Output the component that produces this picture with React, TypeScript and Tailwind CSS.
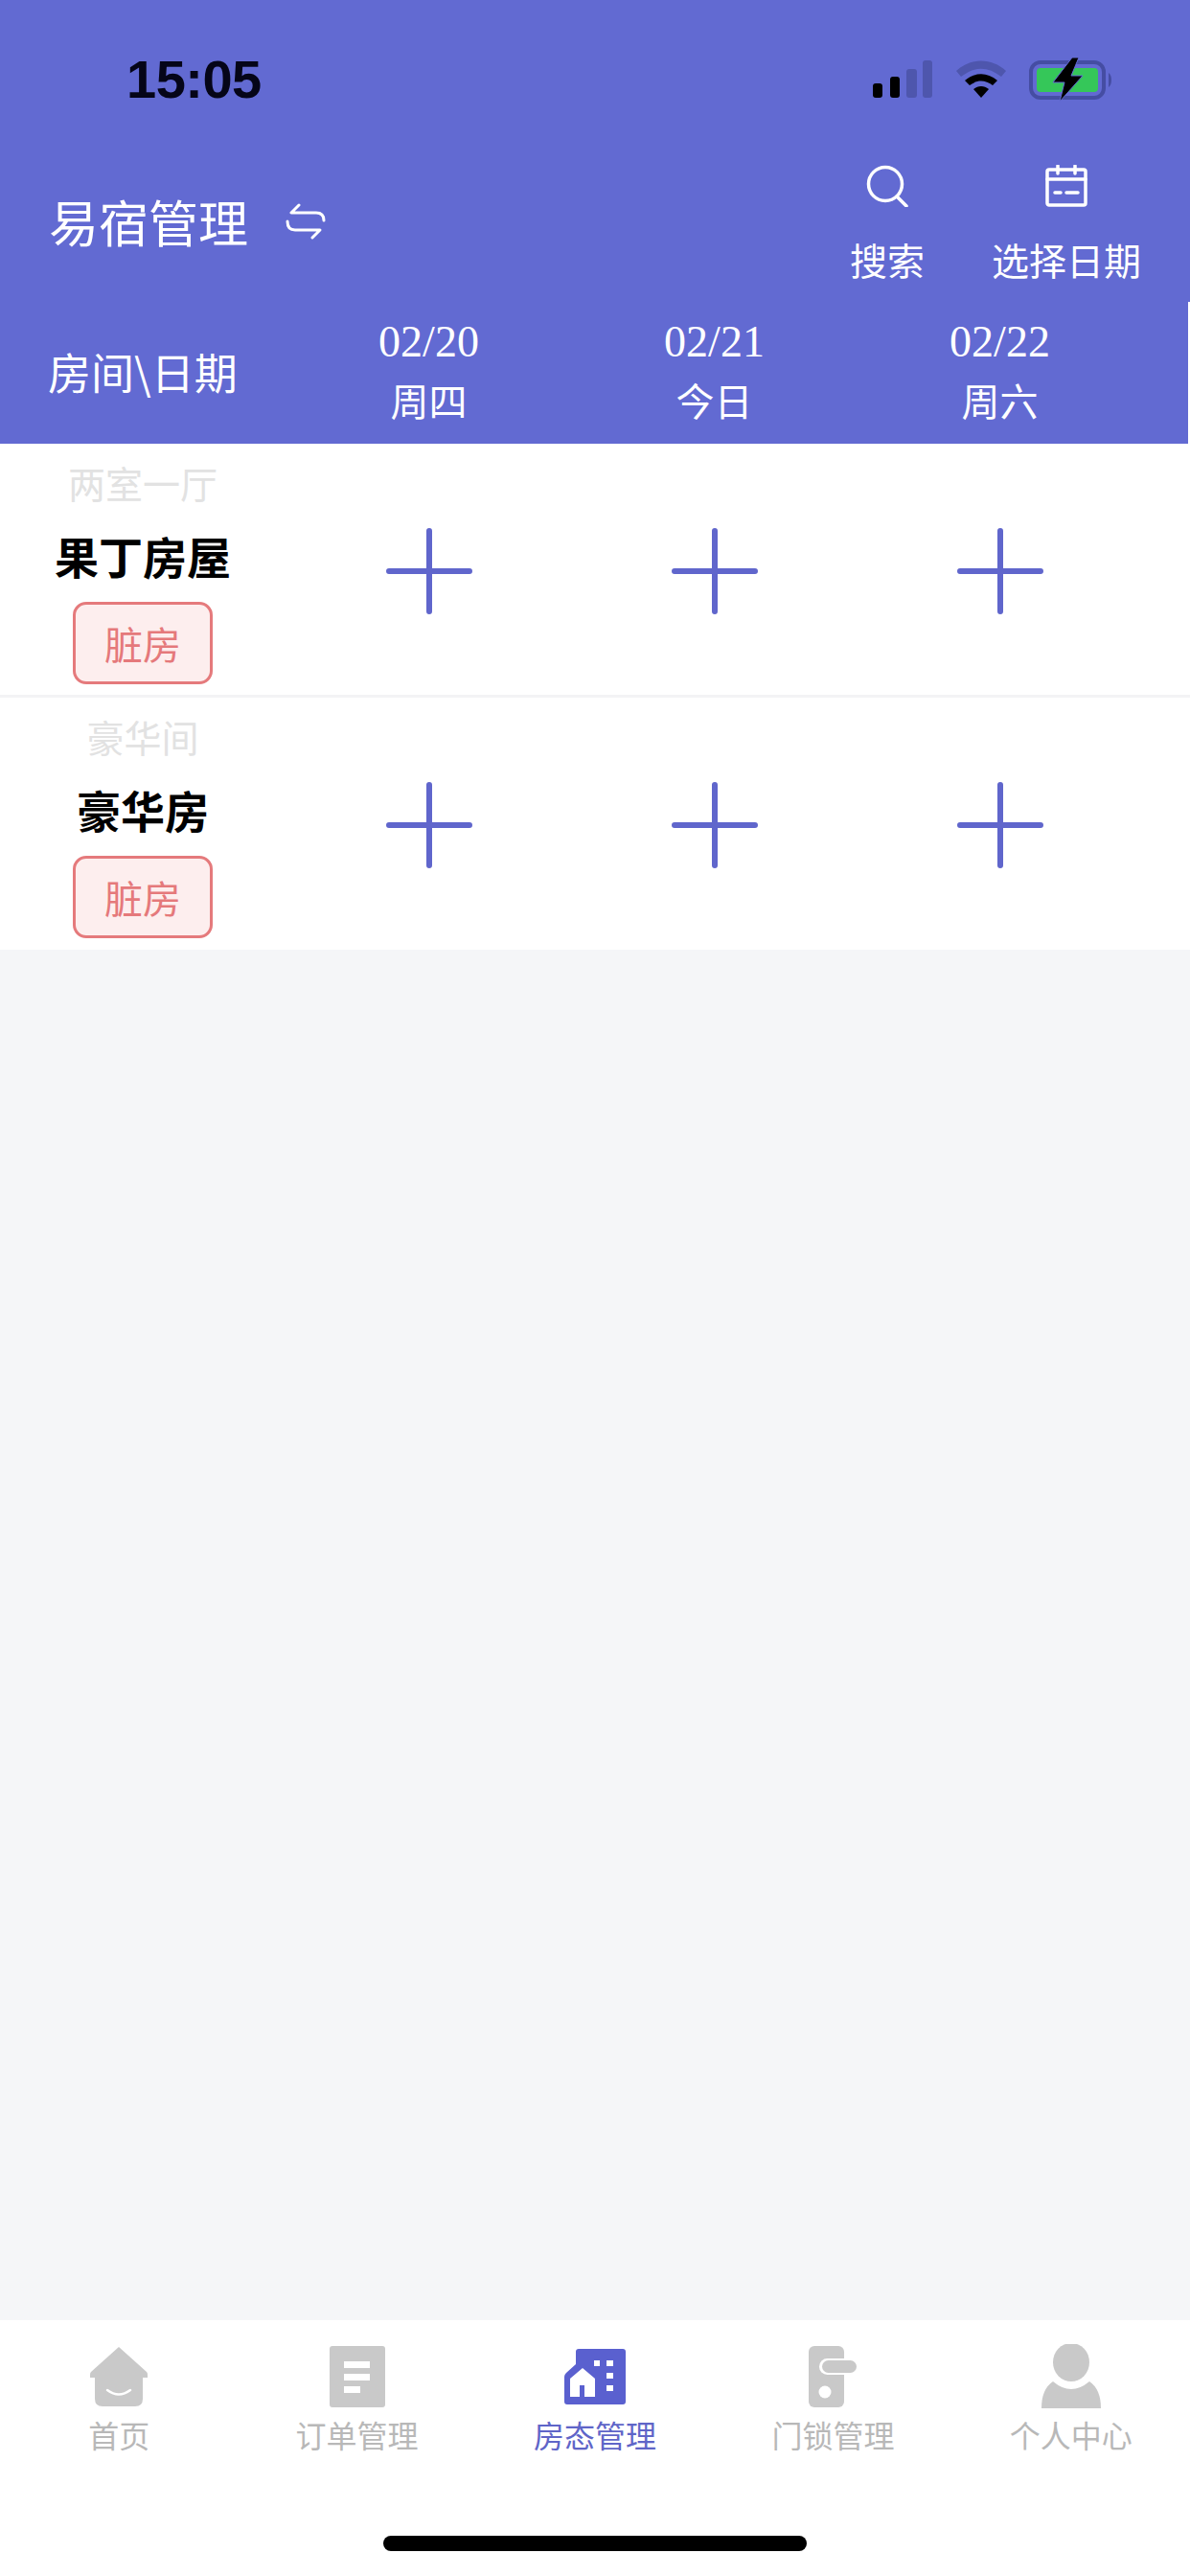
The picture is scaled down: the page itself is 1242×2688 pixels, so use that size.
const cjk = "font-['Noto_Sans_CJK_SC','Noto_Sans',sans-serif]";

function Signal() {
  return (
    <svg width="62" height="39" viewBox="0 0 62 39">
      <rect x="0" y="24" width="10" height="15" rx="3" fill="#000" />
      <rect x="18" y="17" width="10" height="22" rx="3" fill="#000" />
      <rect x="35" y="9" width="11" height="30" rx="3" fill="#4e56ad" />
      <rect x="52" y="0" width="10" height="39" rx="3" fill="#4e56ad" />
    </svg>
  );
}

function Wifi() {
  return (
    <svg width="52" height="39" viewBox="0 0 52 39">
      <path d="M0 11 C15 -3 37 -3 52 11 L47 17 C33 6 19 6 5 17 Z" fill="#4e56ad" />
      <path d="M9 21 C20 12 32 12 43 21 L38 26 C30 20 22 20 14 26 Z" fill="#000" />
      <path d="M18 30 C23 26 29 26 34 30 L26 39 Z" fill="#000" />
    </svg>
  );
}

function Battery() {
  return (
    <svg width="88" height="46" viewBox="0 0 88 46">
      <rect x="2" y="5" width="76" height="37" rx="10" fill="none" stroke="#454da3" strokeWidth="4" />
      <rect x="8" y="11" width="64" height="25" rx="4" fill="#35c759" />
      <path d="M83 16 C87 18 87 29 83 31 Z" fill="#454da3" />
      <path d="M45 0 L25 26 H37 L32 46 L56 19 H44 L52 0 Z" fill="#000" stroke="#626ad2" strokeWidth="1" />
    </svg>
  );
}

function Swap() {
  return (
    <svg width="42" height="38" viewBox="0 0 42 38" fill="none" stroke="#fff" strokeWidth="3" strokeLinecap="round" strokeLinejoin="round">
      <path d="M14 2 L6 10 H32 C37 10 40 12 40 18" />
      <path d="M2 19 C2 25 5 28 10 28 H36 L28 36" />
    </svg>
  );
}

function SearchIcon() {
  return (
    <svg width="44" height="44" viewBox="0 0 44 44" fill="none" stroke="#fff" strokeWidth="3.5" strokeLinecap="round">
      <circle cx="20" cy="20" r="17.5" />
      <path d="M32 33 L42 43" />
    </svg>
  );
}

function CalendarIcon() {
  return (
    <svg width="44" height="44" viewBox="0 0 44 44" fill="none" stroke="#fff" strokeWidth="3.5" strokeLinecap="round" strokeLinejoin="round">
      <rect x="2" y="5" width="40" height="37" rx="2" />
      <path d="M13 1 V9 M31 1 V9 M2 15 H42 M10 29 H16 M22 29 H34" />
    </svg>
  );
}

function Plus() {
  return (
    <svg width="90" height="90" viewBox="0 0 90 90" stroke="#6066cc" strokeWidth="6" strokeLinecap="round">
      <path d="M3 45 H87 M45 3 V87" />
    </svg>
  );
}

function HomeIcon() {
  return (
    <svg width="60" height="63" viewBox="0 0 60 63">
      <path d="M30 1 L59 27 Q60 28 60 30 V33 H55 V55 Q55 63 47 63 H13 Q5 63 5 55 V33 H0 V30 Q0 28 1 27 Z" fill="#c9c9c9" />
      <path d="M18 46 Q30 55 42 46" fill="none" stroke="#fff" strokeWidth="2.5" strokeLinecap="round" />
    </svg>
  );
}

function DocIcon() {
  return (
    <svg width="58" height="64" viewBox="0 0 58 64">
      <rect width="58" height="64" rx="3" fill="#c9c9c9" />
      <rect x="15" y="16" width="27" height="7" fill="#fff" />
      <rect x="15" y="29" width="27" height="7" fill="#fff" />
      <rect x="15" y="42" width="17" height="7" fill="#fff" />
    </svg>
  );
}

function BuildingIcon() {
  return (
    <svg width="64" height="58" viewBox="0 0 64 58">
      <path d="M12 3 Q12 0 15 0 H61 Q64 0 64 3 V55 Q64 58 61 58 H3 Q0 58 0 55 V29 Q0 27 2 25 L12 16 Z" fill="#5a60cf" />
      <path d="M19 20 L32 31 V50 H21 V38 H16 V50 H6 V31 Z" fill="#fff" />
      <rect x="31" y="12" width="6" height="6" fill="#fff" />
      <rect x="44" y="12" width="7" height="6" fill="#fff" />
      <rect x="44" y="25" width="7" height="6" fill="#fff" />
      <rect x="44" y="38" width="7" height="6" fill="#fff" />
    </svg>
  );
}

function LockIcon() {
  return (
    <svg width="50" height="64" viewBox="0 0 50 64">
      <rect x="0" y="0" width="37" height="64" rx="6" fill="#c9c9c9" />
      <rect x="11" y="13" width="39" height="17" rx="8.5" fill="#fff" />
      <rect x="14" y="15" width="36" height="13" rx="6.5" fill="#c9c9c9" />
      <circle cx="17" cy="48" r="6.5" fill="#fff" />
    </svg>
  );
}

function PersonIcon() {
  return (
    <svg width="62" height="67" viewBox="0 0 62 67">
      <ellipse cx="31" cy="19" rx="19" ry="20" fill="#c9c9c9" />
      <path d="M12 39 Q31 55 50 39 Q62 47 62 67 H0 Q0 47 12 39 Z" fill="#c9c9c9" />
    </svg>
  );
}

function Room({ type, name, last }: { type: string; name: string; last?: boolean }) {
  return (
    <div className={`grid grid-cols-[298px_298px_298px_298px] bg-white ${last ? "h-[263px]" : "h-[265px] border-b-[3px] border-[#f3f3f5]"}`}>
      <div className="flex flex-col items-center pt-[18px]">
        <div className="text-[39px] leading-[44px] text-[#e2e2e2]">{type}</div>
        <div className="mt-[28px] text-[46px] leading-[52px] font-semibold text-black">{name}</div>
        <div className="mt-[23px] flex h-[86px] w-[146px] items-center justify-center rounded-[14px] border-[3px] border-[#e57a7c] bg-[#fdeeee] text-[40px] text-[#e5797b]">
          脏房
        </div>
      </div>
      {[0, 1, 2].map((i) => (
        <div key={i} className="flex justify-center pl-[2px] pt-[88px]">
          <Plus />
        </div>
      ))}
    </div>
  );
}

function Tab({ icon, label, active }: { icon: React.ReactNode; label: string; active?: boolean }) {
  return (
    <div className="flex flex-col items-center">
      <div className="flex h-[67px] items-center">{icon}</div>
      <div className={`mt-[5px] text-[32px] leading-[44px] ${active ? "text-[#5f65c8]" : "text-[#b8b8b8]"}`}>{label}</div>
    </div>
  );
}

function DateCol({ date, day }: { date: string; day: string }) {
  return (
    <div className="flex flex-col items-center pl-[1px] pt-[17px]">
      <div className="font-['Liberation_Serif',serif] text-[46px] leading-[50px]">{date}</div>
      <div className="mt-[11px] text-[40px] leading-[48px]">{day}</div>
    </div>
  );
}

export default function App() {
  return (
    <div className={`flex h-[2688px] w-[1242px] flex-col overflow-hidden bg-[#f5f6f8] ${cjk}`}>
      <div className="bg-white text-white">
        <div className="bg-[#626ad2]">
          <div className="flex h-[165px] items-start justify-between pt-[60px] pl-[132px] pr-[80px]">
            <div className="font-['Liberation_Sans',sans-serif] text-[56px] leading-[46px] font-bold tracking-[-0.5px] text-[#050518]">15:05</div>
            <div className="flex items-start">
              <div className="mt-[3px]"><Signal /></div>
              <div className="ml-[25px] mt-[3px]"><Wifi /></div>
              <div className="ml-[24px]"><Battery /></div>
            </div>
          </div>
          <div className="flex h-[150px] justify-between pl-[51px] pr-[51px]">
            <div className="flex items-start pt-[30px]">
              <div className="text-[52px] leading-[72px]">易宿管理</div>
              <div className="ml-[39px] mt-[17px]"><Swap /></div>
            </div>
            <div className="flex gap-[70px] pt-[7px]">
              <div className="flex flex-col items-center">
                <SearchIcon />
                <div className="mt-[26px] text-[39px] leading-[56px]">搜索</div>
              </div>
              <div className="flex flex-col items-center">
                <CalendarIcon />
                <div className="mt-[26px] text-[39px] leading-[56px]">选择日期</div>
              </div>
            </div>
          </div>
        </div>
        <div className="mr-[2px] grid h-[148px] grid-cols-[298px_298px_298px_298px] bg-[#626ad2]">
          <div className="flex items-start pl-[50px] pt-[41px] text-[45px] leading-[64px]">房间\日期</div>
          <DateCol date="02/20" day="周四" />
          <DateCol date="02/21" day="今日" />
          <DateCol date="02/22" day="周六" />
        </div>
      </div>
      <Room type="两室一厅" name="果丁房屋" />
      <Room type="豪华间" name="豪华房" last />
      <div className="flex-1" />
      <div className="grid h-[267px] grid-cols-5 bg-white pt-[25px]">
        <Tab icon={<HomeIcon />} label="首页" />
        <Tab icon={<DocIcon />} label="订单管理" />
        <Tab icon={<BuildingIcon />} label="房态管理" active />
        <Tab icon={<LockIcon />} label="门锁管理" />
        <Tab icon={<PersonIcon />} label="个人中心" />
        <div className="col-span-5 mb-[26px] flex items-end justify-center">
          <div className="h-[16px] w-[442px] rounded-full bg-black" />
        </div>
      </div>
    </div>
  );
}
